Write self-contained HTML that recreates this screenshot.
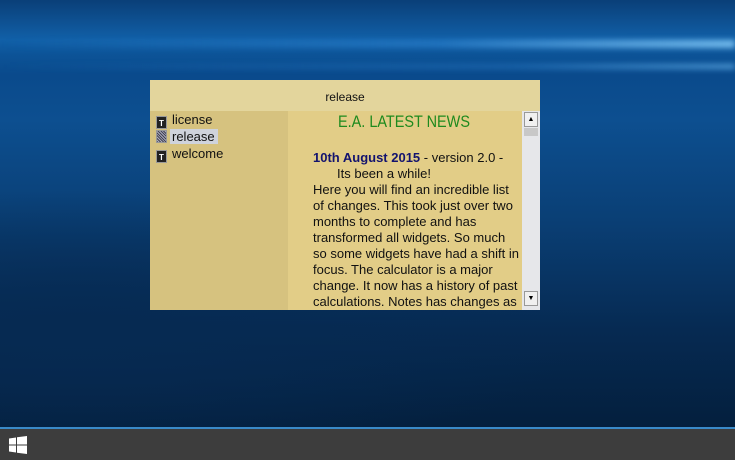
<!DOCTYPE html>
<html><head><style>
*{margin:0;padding:0;box-sizing:border-box}
body{width:735px;height:460px;overflow:hidden;position:relative;font-family:"Liberation Sans",sans-serif;
background:radial-gradient(ellipse 500px 140px at 80px 330px,#062a52 0%,rgba(6,42,82,0) 100%),
linear-gradient(180deg,#0a3f78 0px,#1160a8 40px,#0c5397 55px,#0a4a8c 75px,#0d4f90 120px,#0a3f75 220px,#062a52 330px,#041f3d 428px);}
.streak{position:absolute;left:0;width:735px}
.win{position:absolute;left:150px;top:80px;width:390px;height:230px;background:#e2cd87}
.title{height:31px;background:#e3d59c;text-align:center;font-size:12px;line-height:34px;color:#111}
.left{position:absolute;left:0;top:31px;width:138px;height:199px;background:#d6c27f}
.item{position:absolute;left:6px;height:17px;font-size:13px;line-height:16px;color:#111;white-space:nowrap}
.ic{display:inline-block;width:11px;height:13px;background:#222;color:#fff;font-size:8px;line-height:14px;text-align:center;vertical-align:-2px;margin-right:5px;font-weight:bold;border:1px solid #999}
.right{position:absolute;left:138px;top:31px;width:234px;height:199px;overflow:hidden;font-size:13px;color:#111}
.sb{position:absolute;left:372px;top:31px;width:18px;height:199px;background:#e6e7ea}
.txt{position:absolute;left:25px;top:39px;width:230px;line-height:16px;white-space:nowrap}
</style></head><body>
<div class="streak" style="top:40px;height:8px;background:linear-gradient(90deg,rgba(80,170,240,0),rgba(60,150,230,.4) 60%,rgba(140,210,255,.8));filter:blur(3px)"></div>
<div class="streak" style="top:64px;height:5px;background:linear-gradient(90deg,rgba(80,170,240,0),rgba(60,150,230,.3) 70%,rgba(120,200,255,.6));filter:blur(3px)"></div>
<div class="win">
<div class="title">release</div>
<div class="left">
<div class="item" style="top:1px"><span class="ic">T</span>license</div>
<div class="item" style="top:18px"><span class="ic" style="background:repeating-linear-gradient(45deg,#445 0 1px,#aab 1px 2px)"></span><span style="background:#cfd3dc;padding:0 3px 0 2px;margin-left:-2px">release</span></div>
<div class="item" style="top:35px"><span class="ic">T</span>welcome</div>
</div>
<div class="right">
<div style="position:absolute;left:50px;top:1px;font-size:17px;color:#1e8a1e;transform:scaleX(0.85);transform-origin:left">E.A. LATEST NEWS</div>
<div class="txt"><b style="color:#13136e">10th August 2015</b> - version 2.0 -<br><span style="padding-left:24px">Its been a while!</span><br>Here you will find an incredible list<br>of changes. This took just over two<br>months to complete and has<br>transformed all widgets. So much<br>so some widgets have had a shift in<br>focus. The calculator is a major<br>change. It now has a history of past<br>calculations. Notes has changes as</div>
</div>
<div class="sb">
<div style="position:absolute;left:2px;top:1px;width:14px;height:15px;background:#f0f0f0;border:1px solid #999;font-size:7px;text-align:center;line-height:13px">▲</div>
<div style="position:absolute;left:2px;top:17px;width:14px;height:8px;background:#c8c8c8"></div>
<div style="position:absolute;left:2px;top:180px;width:14px;height:15px;background:#f0f0f0;border:1px solid #999;font-size:7px;text-align:center;line-height:13px">▼</div>
</div>
</div>
<div style="position:absolute;left:0;top:427px;width:735px;height:2px;background:#3a8ac8"></div>
<div style="position:absolute;left:0;top:429px;width:735px;height:31px;background:#3d3d3d"></div>
<svg style="position:absolute;left:9px;top:436px" width="18" height="18" viewBox="0 0 18 18"><path fill="#fff" d="M0 2.5L7 1.5V8.5H0ZM8 1.3L18 0V8.5H8ZM0 9.5H7V16.5L0 15.5ZM8 9.5H18V18L8 16.7Z"/></svg>
</body></html>
